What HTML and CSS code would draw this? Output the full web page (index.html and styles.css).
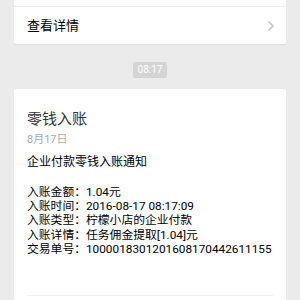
FILE: index.html
```html
<!DOCTYPE html>
<html lang="zh-CN">
<head>
<meta charset="utf-8">
<link rel="stylesheet" href="styles.css">
</head>
<body>
<div class="page">
  <div class="card card-top">
    <div class="card-head"></div>
    <div class="detail-row">
      <span class="detail-text">查看详情</span>
      <svg class="chevron" width="8" height="12" viewBox="0 0 8 12"><path d="M1.5 1.5 L6 6 L1.5 10.5" fill="none" stroke="#c4c4c4" stroke-width="1.6"/></svg>
    </div>
  </div>
  <div class="time-wrap"><span class="time">08:17</span></div>
  <div class="card card-msg">
    <div class="msg-title">零钱入账</div>
    <div class="msg-date">8月17日</div>
    <div class="msg-subject">企业付款零钱入账通知</div>
    <div class="msg-fields">
      <div class="field">入账金额：1.04元</div>
      <div class="field">入账时间：2016-08-17 08:17:09</div>
      <div class="field">入账类型：柠檬小店的企业付款</div>
      <div class="field">入账详情：任务佣金提取[1.04]元</div>
      <div class="field">交易单号：1000018301201608170442611155</div>
    </div>
    <div class="msg-divider"></div>
  </div>
</div>
</body>
</html>
```

FILE: styles.css
```css
html, body {
  margin: 0;
  padding: 0;
  background: #ebebeb;
}
body {
  font-family: Roboto, "Noto Sans CJK SC", sans-serif;
  color: #000;
  width: 300px;
  height: 300px;
  overflow: hidden;
}
.page {
  display: flex;
  flex-direction: column;
}
.card {
  margin: 0 14px;
  background: #fff;
  border-radius: 2px;
  box-shadow: 0 1px 1px rgba(0, 0, 0, 0.06);
}
.card-head {
  height: 6px;
  border-bottom: 1px solid #ececec;
}
.detail-row {
  height: 37px;
  display: flex;
  align-items: center;
  justify-content: space-between;
  padding: 0 11px 0 13px;
}
.detail-text {
  font-size: 13px;
  line-height: 16px;
  color: #000;
}
.chevron {
  display: block;
  margin-top: 1px;
}
.time-wrap {
  display: flex;
  justify-content: center;
  margin-top: 18px;
  margin-bottom: 11px;
}
.time {
  width: 34px;
  height: 16px;
  line-height: 16px;
  text-align: center;
  font-size: 10px;
  color: #fff;
  background: #d4d4d4;
  border-radius: 2px;
}
.card-msg {
  padding: 20px 13px 0 13px;
  height: 200px;
}
.msg-title {
  font-size: 15px;
  line-height: 20px;
  color: #333;
}
.msg-date {
  margin-top: 4px;
  font-size: 11px;
  line-height: 14px;
  color: #aaa;
}
.msg-subject {
  margin-top: 7px;
  font-size: 12px;
  line-height: 16px;
}
.msg-fields {
  margin-top: 15px;
  font-size: 11.8px;
  line-height: 14.2px;
  white-space: nowrap;
}
.msg-divider {
  margin-top: 39px;
  height: 1px;
  background: #f0f0f0;
}
```
